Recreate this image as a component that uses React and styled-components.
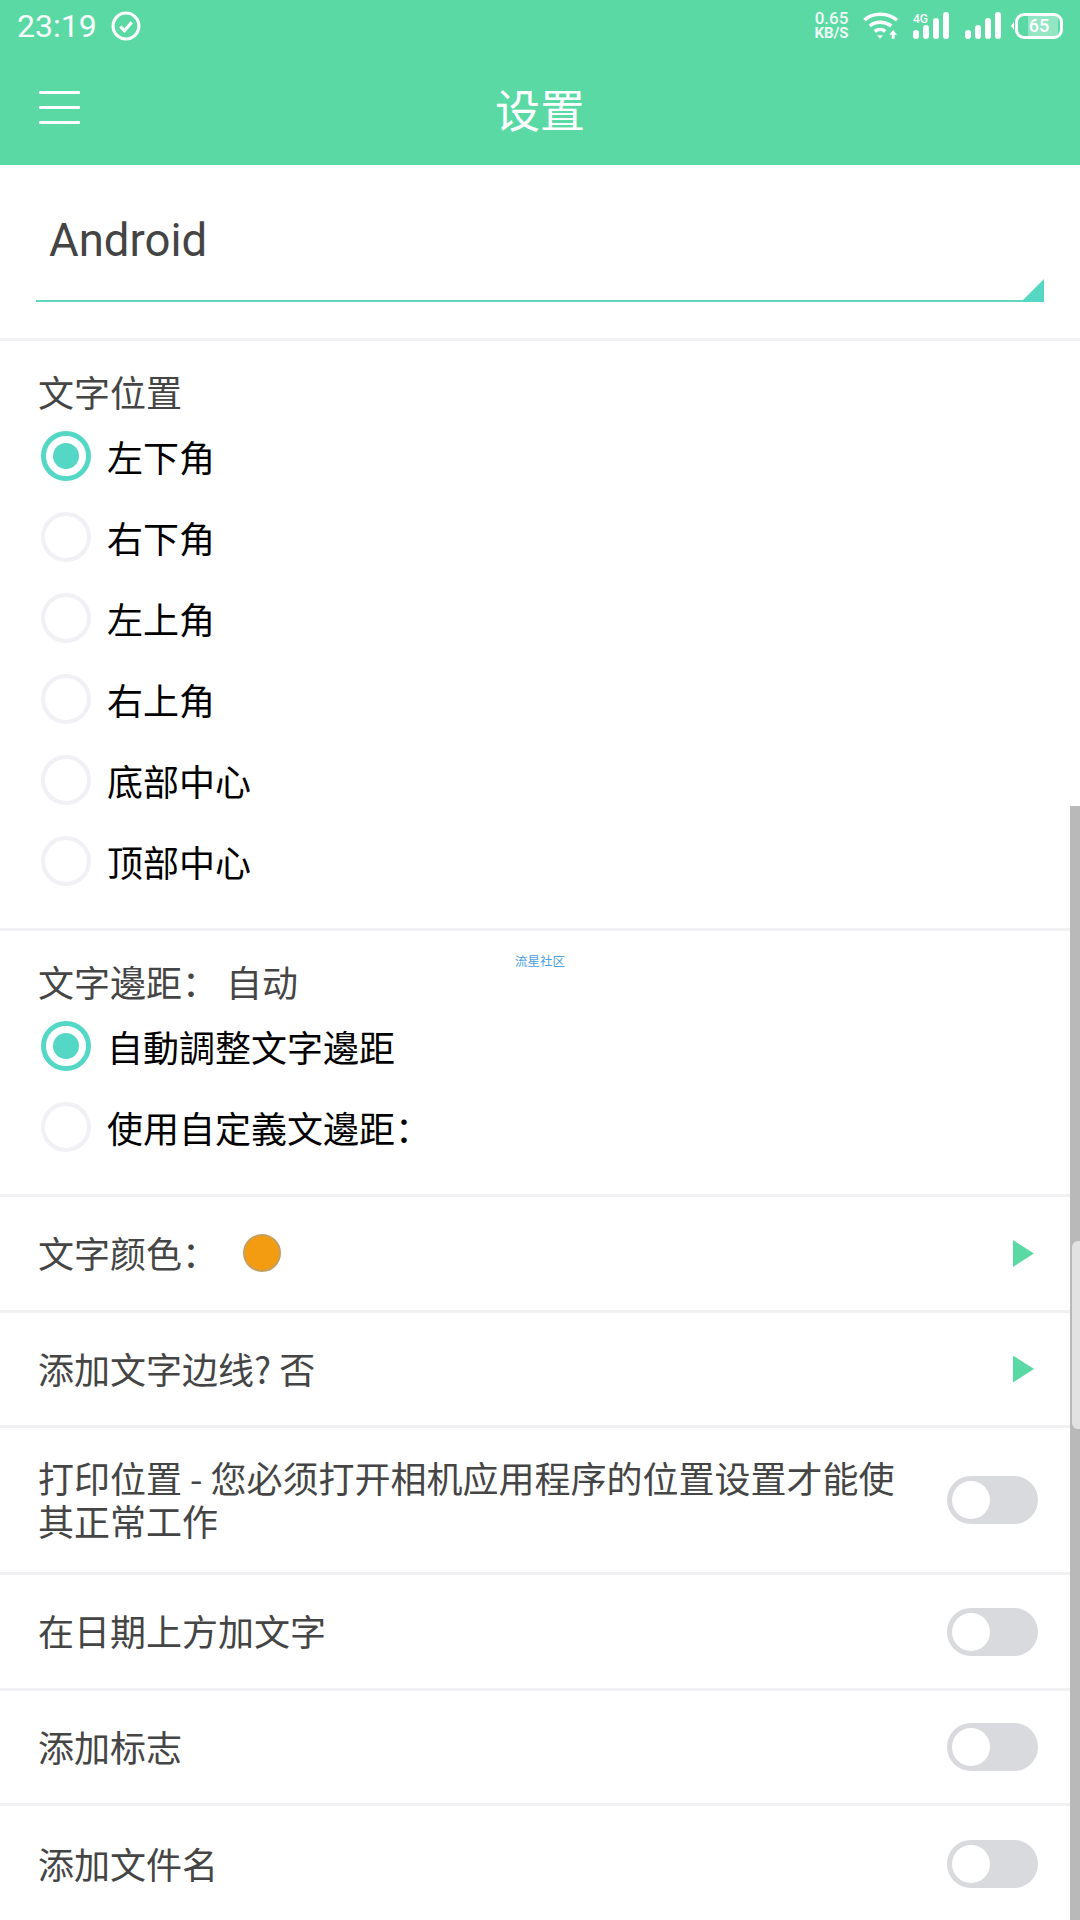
import React from 'react';
import styled, { createGlobalStyle } from 'styled-components';

const Global = createGlobalStyle`
  html, body { margin: 0; padding: 0; background: #fff; }
  body { width: 1080px; height: 1920px; overflow: hidden; font-family: "Noto Sans CJK SC", "Noto Sans", sans-serif; }
  * { box-sizing: border-box; }
`;

const Page = styled.div`
  position: relative;
  width: 1080px;
  height: 1920px;
  overflow: hidden;
  background: #fff;
`;

const Header = styled.header`
  height: 165px;
  background: #5ad9a5;
  color: #fff;
  display: flex;
  flex-direction: column;
`;

const StatusBar = styled.div`
  height: 55px;
  display: flex;
  align-items: center;
  justify-content: space-between;
  padding: 0 17px 4px 17px;
`;

const StatusGroup = styled.div`
  display: flex;
  align-items: center;
`;

const Clock = styled.span`
  font: 400 32px/1 Roboto, sans-serif;
  margin-right: 14px;
  opacity: .96;
`;

const Speed = styled.div`
  display: flex;
  flex-direction: column;
  align-items: center;
  width: 37px;
  font: 500 17px/15px Roboto, sans-serif;
  margin-right: 13px;
  white-space: nowrap;
  opacity: .9;
  span:last-child { font-size: 15px; font-weight: 700; }
`;

const FourG = styled.span`
  position: absolute;
  left: 0;
  top: 1px;
  font: 500 12px/1 Roboto, sans-serif;
`;

const SignalWrap = styled.div`
  position: relative;
  width: 36px;
  height: 27px;
  margin: 0 16px 0 14px;
`;

const Bars = styled.svg`
  display: block;
  width: 36px;
  height: 27px;
  fill: #fff;
`;

const Battery = styled.div`
  position: relative;
  width: 48px;
  height: 26px;
  border: 3px solid #fff;
  border-radius: 9px;
  display: flex;
  align-items: center;
  justify-content: center;
  font: 500 18px/1 Roboto, sans-serif;
  overflow: hidden;
  &::before {
    content: '';
    position: absolute;
    left: 10px; top: 0; bottom: 0; width: 30px;
    background: rgba(255,255,255,.35);
  }
  span { position: relative; }
`;

const BatteryTip = styled.div`
  width: 0; height: 0;
  margin: 0 1px 0 10px;
  border-style: solid;
  border-color: transparent #fff transparent transparent;
  border-width: 4px 3px 4px 0;
`;

const TitleBar = styled.div`
  flex: 1;
  position: relative;
  display: flex;
  align-items: center;
  justify-content: center;
  padding-bottom: 3px;
`;

const Menu = styled.div`
  position: absolute;
  left: 39px;
  top: 36px;
  width: 41px;
  height: 33px;
  display: flex;
  flex-direction: column;
  justify-content: space-between;
  i { display: block; height: 3px; background: #fff; border-radius: 1px; }
`;

const Title = styled.h1`
  margin: 0;
  font-size: 45px;
  line-height: 1;
  font-weight: 400;
`;

const InputBlock = styled.div`
  height: 176px;
  padding: 40px 36px 0;
  border-bottom: 3px solid #f1f1f3;
`;

const InputField = styled.div`
  position: relative;
  height: 97px;
  padding: 8px 0 0 13px;
  border-bottom: 2px solid #62d7bd;
  font: 400 45.5px/55px Roboto, sans-serif;
  color: #444;
  &::after {
    content: '';
    position: absolute;
    right: 0;
    bottom: -2px;
    width: 23px;
    height: 23px;
    background: #55d7c3;
    clip-path: polygon(100% 0, 100% 100%, 0 100%);
  }
`;

const Section = styled.section`
  height: ${p => p.$h}px;
  padding: 26px 38px 0;
  border-bottom: 3px solid #f1f1f3;
`;

const SectionLabel = styled.div`
  font-size: 36px;
  line-height: 48px;
  color: #454545;
  height: 48px;
`;

const RadioRow = styled.div`
  height: 81px;
  display: flex;
  align-items: center;
  color: #000;
  font-size: 36px;
  padding-left: 3px;
`;

const Radio = styled.span`
  width: 50px;
  height: 50px;
  flex: none;
  border-radius: 50%;
  border: ${p => (p.$on ? '5px solid #55d7c6' : '4px solid #f0f0f5')};
  margin-right: 16px;
  display: flex;
  align-items: center;
  justify-content: center;
  &::after {
    content: '';
    display: ${p => (p.$on ? 'block' : 'none')};
    width: 26px;
    height: 26px;
    border-radius: 50%;
    background: #55d7c6;
  }
`;

const Row = styled.div`
  height: ${p => p.$h}px;
  padding: 0 ${p => p.$pr}px 0 38px;
  display: flex;
  align-items: center;
  justify-content: space-between;
  border-bottom: ${p => (p.$last ? '0' : '3px solid #f1f1f3')};
  color: #454545;
  font-size: 36px;
`;

const RowText = styled.div`
  line-height: 43px;
  padding-bottom: 2px;
  width: ${p => (p.$wide ? '880px' : 'auto')};
  display: flex;
  align-items: center;
`;

const Swatch = styled.span`
  width: 38px;
  height: 38px;
  margin-left: 25px;
  border-radius: 50%;
  background: #f39c12;
  border: 2px solid #c49f5e;
`;

const Arrow = styled.span`
  width: 21px;
  height: 27px;
  background: #5ad9a5;
  clip-path: polygon(0 0, 100% 50%, 0 100%);
`;

const Toggle = styled.span`
  position: relative;
  width: 91px;
  height: 48px;
  flex: none;
  border-radius: 24px;
  background: #d9dade;
  &::after {
    content: '';
    position: absolute;
    left: 5px;
    top: 5px;
    width: 38px;
    height: 38px;
    border-radius: 50%;
    background: #fff;
  }
`;

const Watermark = styled.div`
  position: absolute;
  left: 515px;
  top: 953px;
  font-size: 12.5px;
  line-height: 15px;
  color: #4b9fe0;
`;

const Scrollbar = styled.div`
  position: absolute;
  right: 0;
  top: 806px;
  bottom: 0;
  width: 10px;
  background: #b9b9b9;
`;

const EdgeHandle = styled.div`
  position: absolute;
  right: 0;
  top: 1241px;
  width: 8px;
  height: 188px;
  background: #e2e2e2;
  border-radius: 6px 0 0 6px;
`;

const BarsIcon = () => (
  <Bars viewBox="0 0 36 27">
    <rect x="0" y="18" width="6" height="9" rx="3" />
    <rect x="10" y="13" width="6" height="14" rx="3" />
    <rect x="20" y="6" width="6" height="21" rx="3" />
    <rect x="30" y="0" width="6" height="27" rx="3" />
  </Bars>
);

const positions = ['左下角', '右下角', '左上角', '右上角', '底部中心', '顶部中心'];

export default function App() {
  return (
    <Page>
      <Global />
      <Header>
        <StatusBar>
          <StatusGroup>
            <Clock>23:19</Clock>
            <svg width="30" height="30" viewBox="0 0 29 29" fill="none" stroke="#fff">
              <circle cx="14.5" cy="14.5" r="12.5" strokeWidth="3" />
              <path d="M9 15l4 4 7-8" strokeWidth="3" />
            </svg>
          </StatusGroup>
          <StatusGroup>
            <Speed>
              <span>0.65</span>
              <span>KB/S</span>
            </Speed>
            <svg width="36" height="29" viewBox="0 0 37 29" fill="none" stroke="#fff" strokeWidth="3.6">
              <path d="M1.5 9C10 1 25 1 35 9" />
              <path d="M7 15c6-5 15-5 22 0" />
              <path d="M12 20.500c3.500-2.500 8-2.500 11 0" />
              <path d="M14.500 24.500h6l-3 3.500z" fill="#fff" stroke="none" />
              <path d="M31 19l4 5h-2.500v4h-3v-4H27z" fill="#fff" stroke="none" />
            </svg>
            <SignalWrap>
              <FourG>4G</FourG>
              <BarsIcon />
            </SignalWrap>
            <BarsIcon />
            <BatteryTip />
            <Battery>
              <span>65</span>
            </Battery>
          </StatusGroup>
        </StatusBar>
        <TitleBar>
          <Menu>
            <i />
            <i />
            <i />
          </Menu>
          <Title>设置</Title>
        </TitleBar>
      </Header>

      <InputBlock>
        <InputField>Android</InputField>
      </InputBlock>

      <Section $h={590}>
        <SectionLabel>文字位置</SectionLabel>
        {positions.map((t, i) => (
          <RadioRow key={t}>
            <Radio $on={i === 0} />
            {t}
          </RadioRow>
        ))}
      </Section>

      <Section $h={266}>
        <SectionLabel>文字邊距： 自动</SectionLabel>
        <RadioRow>
          <Radio $on />
          自動調整文字邊距
        </RadioRow>
        <RadioRow>
          <Radio />
          使用自定義文邊距：
        </RadioRow>
      </Section>

      <Row $h={116} $pr={46}>
        <RowText>
          文字颜色：
          <Swatch />
        </RowText>
        <Arrow />
      </Row>
      <Row $h={115} $pr={46}>
        <RowText>添加文字边线? 否</RowText>
        <Arrow />
      </Row>
      <Row $h={147} $pr={42}>
        <RowText $wide>打印位置 - 您必须打开相机应用程序的位置设置才能使其正常工作</RowText>
        <Toggle />
      </Row>
      <Row $h={116} $pr={42}>
        <RowText>在日期上方加文字</RowText>
        <Toggle />
      </Row>
      <Row $h={115} $pr={42}>
        <RowText>添加标志</RowText>
        <Toggle />
      </Row>
      <Row $h={116} $pr={42} $last>
        <RowText>添加文件名</RowText>
        <Toggle />
      </Row>

      <Watermark>流星社区</Watermark>
      <Scrollbar />
      <EdgeHandle />
    </Page>
  );
}
